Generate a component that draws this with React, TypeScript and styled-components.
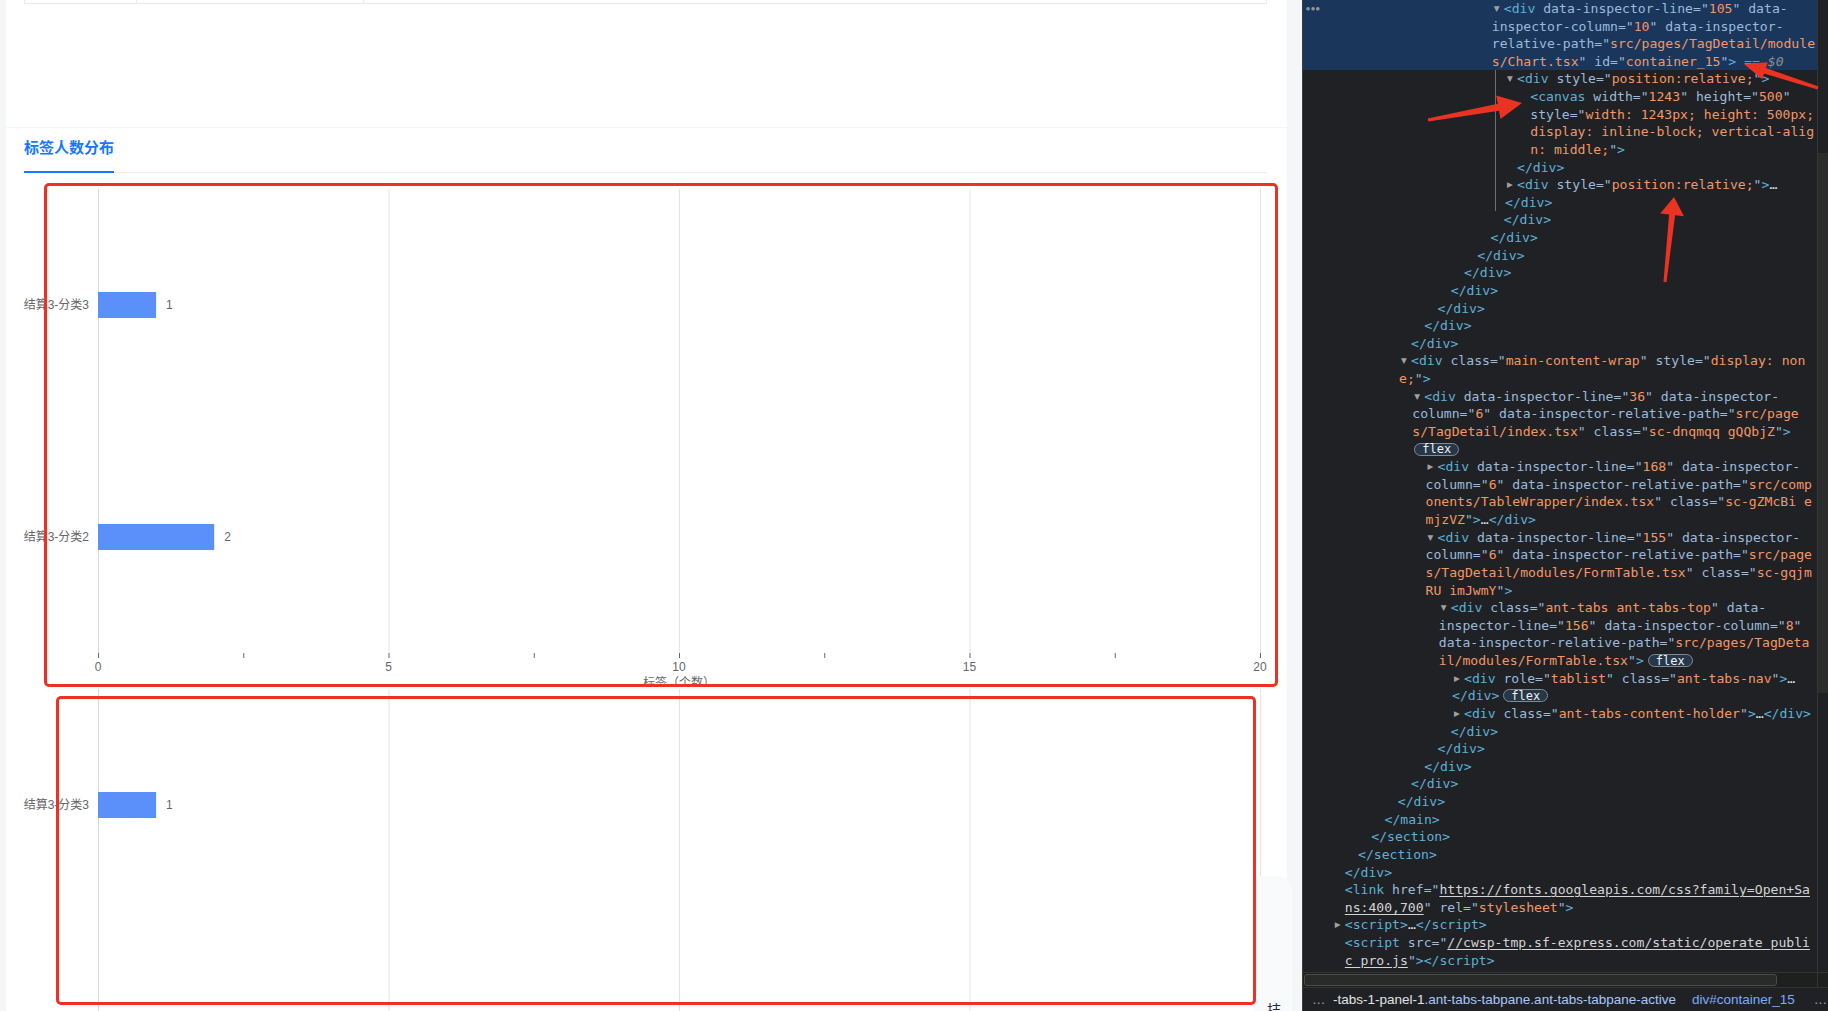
import React from 'react';
import styled, { createGlobalStyle } from 'styled-components';

const GlobalStyle = createGlobalStyle`
  * { box-sizing: border-box; }
  html, body { margin: 0; padding: 0; width: 1828px; height: 1011px; overflow: hidden; background: #f5f6f8; }
  #root { width: 1828px; height: 1011px; }
`;

const Screen = styled.div`
  position: relative;
  display: flex;
  width: 1828px;
  height: 1011px;
  overflow: hidden;
`;

/* ---------------- left page ---------------- */

const PagePane = styled.main`
  width: 1302px;
  height: 1011px;
  flex: none;
  overflow: hidden;
  background: #f5f6f8;
  padding-left: 6px;
  display: flex;
  flex-direction: column;
  gap: 1px;
  font-family: "Liberation Sans", "Noto Sans CJK SC", sans-serif;
`;

const Card = styled.section<{ $height?: number }>`
  width: 1281px;
  flex: ${p => (p.$height ? 'none' : '1')};
  height: ${p => (p.$height ? `${p.$height}px` : 'auto')};
  background: #fff;
  padding: 0 20px 0 18px;
  overflow: hidden;
`;

const TableTail = styled.div`
  display: grid;
  grid-template-columns: 112px 227px 1fr;
  width: 1243px;
  height: 4px;
  border: 1px solid #e9e9e9;
  border-top: none;
`;

const TableCell = styled.div`
  border-right: 1px solid #eeeeee;
  &:last-child { border-right: none; }
`;

const TabNav = styled.div`
  display: flex;
  width: 1243px;
  border-bottom: 1px solid #eeeeee;
`;

const Tab = styled.div`
  padding: 8px 0 13px;
  margin-bottom: -1px;
  font-family: "Noto Sans CJK SC", sans-serif;
  font-size: 15px;
  line-height: 22px;
  font-weight: 700;
  color: #1677ff;
  border-bottom: 2px solid #1677ff;
`;

const ChartStack = styled.div`
  margin-top: 11px;
  display: flex;
  flex-direction: column;
`;

const ChartSvg = styled.svg`
  display: block;
  width: 1243px;
  height: 500px;
  flex: none;
  text {
    font-family: "Liberation Sans", "Noto Sans CJK SC", sans-serif;
    font-size: 12px;
    fill: #666666;
  }
`;

const PLOT = { left: 74, right: 1236, top: 5, bottom: 469, max: 20 };
const UNIT = (PLOT.right - PLOT.left) / PLOT.max;

type Datum = { label: string; value: number };

function BarChart({ rows, bands }: { rows: Datum[]; bands: number }) {
  const bandH = (PLOT.bottom - PLOT.top) / bands;
  const grid = [0, 5, 10, 15, 20];
  const ticks = Array.from({ length: 9 }, (_, i) => i * 2.5);
  return (
    <ChartSvg viewBox="0 0 1243 500">
      {grid.map(v => (
        <line
          key={`g${v}`}
          x1={PLOT.left + v * UNIT + 0.5}
          x2={PLOT.left + v * UNIT + 0.5}
          y1={PLOT.top}
          y2={PLOT.bottom}
          stroke={v === 0 ? '#d9d9d9' : '#e4e4e4'}
          strokeWidth={1}
        />
      ))}
      {ticks.map(v => (
        <line
          key={`t${v}`}
          x1={PLOT.left + v * UNIT + 0.5}
          x2={PLOT.left + v * UNIT + 0.5}
          y1={PLOT.bottom}
          y2={PLOT.bottom + 5}
          stroke="#5d6b7e"
          strokeWidth={1}
        />
      ))}
      {grid.map(v => (
        <text key={`l${v}`} x={PLOT.left + v * UNIT} y={487} textAnchor="middle">
          {v}
        </text>
      ))}
      <text x={(PLOT.left + PLOT.right) / 2} y={503} textAnchor="middle">
        标签（个数）
      </text>
      {rows.map((r, i) => {
        const cy = PLOT.top + (i + 0.5) * bandH;
        const w = r.value * UNIT;
        return (
          <g key={r.label + i}>
            <text x={65} y={cy + 4} textAnchor="end">
              {r.label}
            </text>
            <rect x={PLOT.left} y={cy - 13} width={w} height={26} fill="#5B8FF9" />
            <text x={PLOT.left + w + 10} y={cy + 4}>
              {r.value}
            </text>
          </g>
        );
      })}
    </ChartSvg>
  );
}

const RedFrame = styled.div<{ $x: number; $y: number; $w: number; $h: number }>`
  position: absolute;
  left: ${p => p.$x}px;
  top: ${p => p.$y}px;
  width: ${p => p.$w}px;
  height: ${p => p.$h}px;
  border: 3px solid #ee3124;
  border-radius: 5px;
  pointer-events: none;
  z-index: 5;
`;

const SideFloat = styled.div`
  position: absolute;
  left: 1254px;
  top: 876px;
  width: 38px;
  height: 140px;
  background: rgba(249, 250, 252, 0.94);
  border-top-right-radius: 14px;
  z-index: 3;
`;

const SideFloatText = styled.span`
  position: absolute;
  left: 13px;
  top: 125px;
  font-family: "Noto Sans CJK SC", sans-serif;
  font-size: 14px;
  line-height: 16px;
  color: #1d2b4f;
`;

/* ---------------- devtools ---------------- */

const DevTools = styled.aside`
  width: 526px;
  height: 1011px;
  flex: none;
  display: flex;
  flex-direction: column;
  background: #202124;
  border-left: 1px solid #3d3d3d;
`;

const TreeArea = styled.div`
  display: flex;
  height: 972px;
  flex: none;
`;

const Tree = styled.div`
  position: relative;
  flex: 1;
  overflow: hidden;
  font-family: "DejaVu Sans Mono", "Liberation Mono", monospace;
  font-size: 13.1px;
  color: #e3e3e3;
  margin-top: -0.4px;
`;

const Selected = styled.div`
  position: relative;
  background: #1a365a;
`;

const SelDots = styled.span`
  position: absolute;
  left: 3px;
  top: 4px;
  font-family: "DejaVu Sans", sans-serif;
  font-size: 4.5px;
  line-height: 10px;
  letter-spacing: 1px;
  color: #8f969f;
`;

const ChildGuide = styled.div`
  position: relative;
  &::before {
    content: '';
    position: absolute;
    left: 192px;
    top: 0;
    bottom: 0;
    width: 1px;
    background: #6f6f6f;
  }
`;

const Line = styled.div<{ $x: number }>`
  height: 17.64px;
  padding-left: ${p => p.$x}px;
  display: flex;
  align-items: center;
  white-space: pre;
  overflow: hidden;
`;

const Twisty = styled.span`
  width: 10px;
  flex: none;
  font-family: "DejaVu Sans", sans-serif;
  font-size: 7.5px;
  color: #a0a0a0;
`;

type Kind = 't' | 'n' | 'q' | 'v' | 'x' | 'd' | 'i' | 'l' | 'b';
type Part = [Kind, string];
interface Row {
  x: number;
  tri?: 'open' | 'closed';
  parts: Part[];
}

const TOKEN_COLOR: Record<Kind, string> = {
  t: '#5db0d7',
  n: '#9bbbdc',
  q: '#9bbbdc',
  v: '#f29766',
  x: '#e3e3e3',
  d: '#8a8f96',
  i: '#8a8f96',
  l: '#d4d4d4',
  b: '#eeeeee',
};

const Tok = styled.span<{ $k: Kind }>`
  color: ${p => TOKEN_COLOR[p.$k]};
  font-style: ${p => (p.$k === 'i' ? 'italic' : 'normal')};
  text-decoration: ${p => (p.$k === 'l' ? 'underline' : 'none')};
  text-underline-offset: 2px;
`;

const Badge = styled.span`
  display: inline-flex;
  align-items: center;
  height: 13px;
  padding: 0 7px;
  margin-left: 4px;
  border: 1px solid #7f8a97;
  border-radius: 7px;
  background: #26374a;
  color: #f1f1f1;
  font-size: 12px;
  line-height: 1;
`;

const VScroll = styled.div`
  width: 11px;
  flex: none;
  border-left: 1px solid #353535;
  padding-top: 153px;
`;

const VThumb = styled.div`
  height: 540px;
  background: #2c2c2c;
`;

const HScroll = styled.div`
  height: 15px;
  flex: none;
  display: flex;
  border-top: 1px solid #333;
  background: #1f1f1f;
`;

const HThumb = styled.div`
  width: 473px;
  margin: 1px 0 1px 1px;
  border: 1px solid #4a4a4a;
  border-radius: 3px;
  background: #2a2a2a;
`;

const HTrack = styled.div`
  flex: 1;
`;

const Corner = styled.div`
  width: 11px;
  border-left: 1px solid #353535;
`;

const Crumbs = styled.div`
  height: 24px;
  flex: none;
  display: flex;
  align-items: center;
  padding-left: 9px;
  border-top: 1px solid #333;
  background: #202124;
  font-family: "Liberation Sans", sans-serif;
  font-size: 13.5px;
  white-space: nowrap;
  overflow: hidden;
`;

const CrumbMore = styled.span<{ $gap: number }>`
  color: #9aa0a6;
  width: ${p => p.$gap}px;
  flex: none;
`;

const Crumb = styled.span<{ $active?: boolean }>`
  color: ${p => (p.$active ? '#7cacf8' : '#e3e3e3')};
  margin-right: ${p => (p.$active ? 19 : 16)}px;
`;

const CrumbClass = styled.span`
  color: #a8c7fa;
`;

/* ---------------- annotations ---------------- */

const Overlay = styled.svg`
  position: absolute;
  left: 0;
  top: 0;
  width: 1828px;
  height: 1011px;
  pointer-events: none;
  z-index: 10;
`;

function arrowPoints(
  tx: number, ty: number, px: number, py: number,
  lh: number, wh: number, ws: number, wt: number,
) {
  const dx = px - tx;
  const dy = py - ty;
  const len = Math.hypot(dx, dy);
  const ux = dx / len;
  const uy = dy / len;
  const nx = -uy;
  const ny = ux;
  const bx = px - ux * lh;
  const by = py - uy * lh;
  const pts = [
    [tx + nx * wt, ty + ny * wt],
    [bx + nx * ws, by + ny * ws],
    [bx + nx * wh, by + ny * wh],
    [px, py],
    [bx - nx * wh, by - ny * wh],
    [bx - nx * ws, by - ny * ws],
    [tx - nx * wt, ty - ny * wt],
  ];
  return pts.map(p => `${p[0].toFixed(1)},${p[1].toFixed(1)}`).join(' ');
}

/* ---------------- data ---------------- */

const L = (lvl: number) => 42.8 + lvl * 13.25 - 1;
const C = (lvl: number) => L(lvl) - 12;

const closing = (lvl: number, tag = 'div'): Row => ({ x: L(lvl), parts: [['t', `</${tag}>`]] });

const ROWS: Row[] = [
  { x: L(12), tri: 'open', parts: [['t', '<div'], ['n', ' data-inspector-line'], ['q', '="'], ['v', '105'], ['q', '"'], ['n', ' data-']] },
  { x: C(12), parts: [['n', 'inspector-column'], ['q', '="'], ['v', '10'], ['q', '"'], ['n', ' data-inspector-']] },
  { x: C(12), parts: [['n', 'relative-path'], ['q', '="'], ['v', 'src/pages/TagDetail/module']] },
  { x: C(12), parts: [['v', 's/Chart.tsx'], ['q', '"'], ['n', ' id'], ['q', '="'], ['v', 'container_15'], ['q', '"'], ['t', '>'], ['d', ' == '], ['i', '$0']] },
  { x: L(13), tri: 'open', parts: [['t', '<div'], ['n', ' style'], ['q', '="'], ['v', 'position:relative;'], ['q', '"'], ['t', '>']] },
  { x: L(14), parts: [['t', '<canvas'], ['n', ' width'], ['q', '="'], ['v', '1243'], ['q', '"'], ['n', ' height'], ['q', '="'], ['v', '500'], ['q', '"']] },
  { x: L(14), parts: [['n', 'style'], ['q', '="'], ['v', 'width: 1243px; height: 500px;']] },
  { x: L(14), parts: [['v', 'display: inline-block; vertical-alig']] },
  { x: L(14), parts: [['v', 'n: middle;'], ['q', '"'], ['t', '>']] },
  closing(13),
  { x: L(13), tri: 'closed', parts: [['t', '<div'], ['n', ' style'], ['q', '="'], ['v', 'position:relative;'], ['q', '"'], ['t', '>'], ['x', '…']] },
  { x: C(13), parts: [['t', '</div>']] },
  closing(12),
  closing(11),
  closing(10),
  closing(9),
  closing(8),
  closing(7),
  closing(6),
  closing(5),
  { x: L(5), tri: 'open', parts: [['t', '<div'], ['n', ' class'], ['q', '="'], ['v', 'main-content-wrap'], ['q', '"'], ['n', ' style'], ['q', '="'], ['v', 'display: non']] },
  { x: C(5), parts: [['v', 'e;'], ['q', '"'], ['t', '>']] },
  { x: L(6), tri: 'open', parts: [['t', '<div'], ['n', ' data-inspector-line'], ['q', '="'], ['v', '36'], ['q', '"'], ['n', ' data-inspector-']] },
  { x: C(6), parts: [['n', 'column'], ['q', '="'], ['v', '6'], ['q', '"'], ['n', ' data-inspector-relative-path'], ['q', '="'], ['v', 'src/page']] },
  { x: C(6), parts: [['v', 's/TagDetail/index.tsx'], ['q', '"'], ['n', ' class'], ['q', '="'], ['v', 'sc-dnqmqq gQQbjZ'], ['q', '"'], ['t', '>']] },
  { x: C(6) - 2, parts: [['b', 'flex']] },
  { x: L(7), tri: 'closed', parts: [['t', '<div'], ['n', ' data-inspector-line'], ['q', '="'], ['v', '168'], ['q', '"'], ['n', ' data-inspector-']] },
  { x: C(7), parts: [['n', 'column'], ['q', '="'], ['v', '6'], ['q', '"'], ['n', ' data-inspector-relative-path'], ['q', '="'], ['v', 'src/comp']] },
  { x: C(7), parts: [['v', 'onents/TableWrapper/index.tsx'], ['q', '"'], ['n', ' class'], ['q', '="'], ['v', 'sc-gZMcBi e']] },
  { x: C(7), parts: [['v', 'mjzVZ'], ['q', '"'], ['t', '>'], ['x', '…'], ['t', '</div>']] },
  { x: L(7), tri: 'open', parts: [['t', '<div'], ['n', ' data-inspector-line'], ['q', '="'], ['v', '155'], ['q', '"'], ['n', ' data-inspector-']] },
  { x: C(7), parts: [['n', 'column'], ['q', '="'], ['v', '6'], ['q', '"'], ['n', ' data-inspector-relative-path'], ['q', '="'], ['v', 'src/page']] },
  { x: C(7), parts: [['v', 's/TagDetail/modules/FormTable.tsx'], ['q', '"'], ['n', ' class'], ['q', '="'], ['v', 'sc-gqjm']] },
  { x: C(7), parts: [['v', 'RU imJwmY'], ['q', '"'], ['t', '>']] },
  { x: L(8), tri: 'open', parts: [['t', '<div'], ['n', ' class'], ['q', '="'], ['v', 'ant-tabs ant-tabs-top'], ['q', '"'], ['n', ' data-']] },
  { x: C(8), parts: [['n', 'inspector-line'], ['q', '="'], ['v', '156'], ['q', '"'], ['n', ' data-inspector-column'], ['q', '="'], ['v', '8'], ['q', '"']] },
  { x: C(8), parts: [['n', 'data-inspector-relative-path'], ['q', '="'], ['v', 'src/pages/TagDeta']] },
  { x: C(8), parts: [['v', 'il/modules/FormTable.tsx'], ['q', '"'], ['t', '>'], ['b', 'flex']] },
  { x: L(9), tri: 'closed', parts: [['t', '<div'], ['n', ' role'], ['q', '="'], ['v', 'tablist'], ['q', '"'], ['n', ' class'], ['q', '="'], ['v', 'ant-tabs-nav'], ['q', '"'], ['t', '>'], ['x', '…']] },
  { x: C(9), parts: [['t', '</div>'], ['b', 'flex']] },
  { x: L(9), tri: 'closed', parts: [['t', '<div'], ['n', ' class'], ['q', '="'], ['v', 'ant-tabs-content-holder'], ['q', '"'], ['t', '>'], ['x', '…'], ['t', '</div>']] },
  closing(8),
  closing(7),
  closing(6),
  closing(5),
  closing(4),
  closing(3, 'main'),
  closing(2, 'section'),
  closing(1, 'section'),
  closing(0),
  { x: L(0), parts: [['t', '<link'], ['n', ' href'], ['q', '="'], ['l', 'https://fonts.googleapis.com/css?family=Open+Sa']] },
  { x: L(0), parts: [['l', 'ns:400,700'], ['q', '"'], ['n', ' rel'], ['q', '="'], ['v', 'stylesheet'], ['q', '"'], ['t', '>']] },
  { x: L(0), tri: 'closed', parts: [['t', '<script>'], ['x', '…'], ['t', '</script>']] },
  { x: L(0), parts: [['t', '<script'], ['n', ' src'], ['q', '="'], ['l', '//cwsp-tmp.sf-express.com/static/operate_publi']] },
  { x: L(0), parts: [['l', 'c_pro.js'], ['q', '"'], ['t', '>'], ['t', '</script>']] },
];

function TreeLine({ row }: { row: Row }) {
  return (
    <Line $x={row.tri ? row.x - 10 : row.x}>
      {row.tri && <Twisty>{row.tri === 'open' ? '▼' : '▶'}</Twisty>}
      {row.parts.map(([k, text], i) =>
        k === 'b' ? (
          <Badge key={i}>{text}</Badge>
        ) : (
          <Tok key={i} $k={k}>
            {text}
          </Tok>
        ),
      )}
    </Line>
  );
}

const CHART_A: Datum[] = [
  { label: '结算3-分类3', value: 1 },
  { label: '结算3-分类2', value: 2 },
];
const CHART_B: Datum[] = [{ label: '结算3-分类3', value: 1 }];

export default function App() {
  return (
    <Screen>
      <GlobalStyle />
      <PagePane>
        <Card $height={127}>
          <TableTail>
            <TableCell />
            <TableCell />
            <TableCell />
          </TableTail>
        </Card>
        <Card>
          <TabNav>
            <Tab>标签人数分布</Tab>
          </TabNav>
          <ChartStack>
            <BarChart rows={CHART_A} bands={2} />
            <BarChart rows={CHART_B} bands={2} />
          </ChartStack>
        </Card>
      </PagePane>

      <DevTools>
        <TreeArea>
          <Tree>
            <Selected>
              <SelDots>●●●</SelDots>
              {ROWS.slice(0, 4).map((r, i) => (
                <TreeLine key={i} row={r} />
              ))}
            </Selected>
            <ChildGuide>
              {ROWS.slice(4, 12).map((r, i) => (
                <TreeLine key={i} row={r} />
              ))}
            </ChildGuide>
            {ROWS.slice(12).map((r, i) => (
              <TreeLine key={i} row={r} />
            ))}
          </Tree>
          <VScroll>
            <VThumb />
          </VScroll>
        </TreeArea>
        <HScroll>
          <HThumb />
          <HTrack />
          <Corner />
        </HScroll>
        <Crumbs>
          <CrumbMore $gap={21}>…</CrumbMore>
          <Crumb>
            -tabs-1-panel-1<CrumbClass>.ant-tabs-tabpane.ant-tabs-tabpane-active</CrumbClass>
          </Crumb>
          <Crumb $active>div#container_15</Crumb>
          <CrumbMore $gap={16}>…</CrumbMore>
        </Crumbs>
      </DevTools>

      <SideFloat>
        <SideFloatText>拮</SideFloatText>
      </SideFloat>
      <RedFrame $x={44} $y={183} $w={1234} $h={504} />
      <RedFrame $x={56} $y={696} $w={1200} $h={309} />

      <Overlay viewBox="0 0 1828 1011">
        <polygon points={arrowPoints(1818, 88, 1744, 64, 22, 9, 3, 1.5)} fill="#ea3323" />
        <polygon points={arrowPoints(1428, 120, 1522, 103, 24, 12, 3.5, 1.5)} fill="#ea3323" />
        <polygon points={arrowPoints(1665, 282, 1674, 197, 18, 12, 3, 1.5)} fill="#ea3323" />
      </Overlay>
    </Screen>
  );
}
